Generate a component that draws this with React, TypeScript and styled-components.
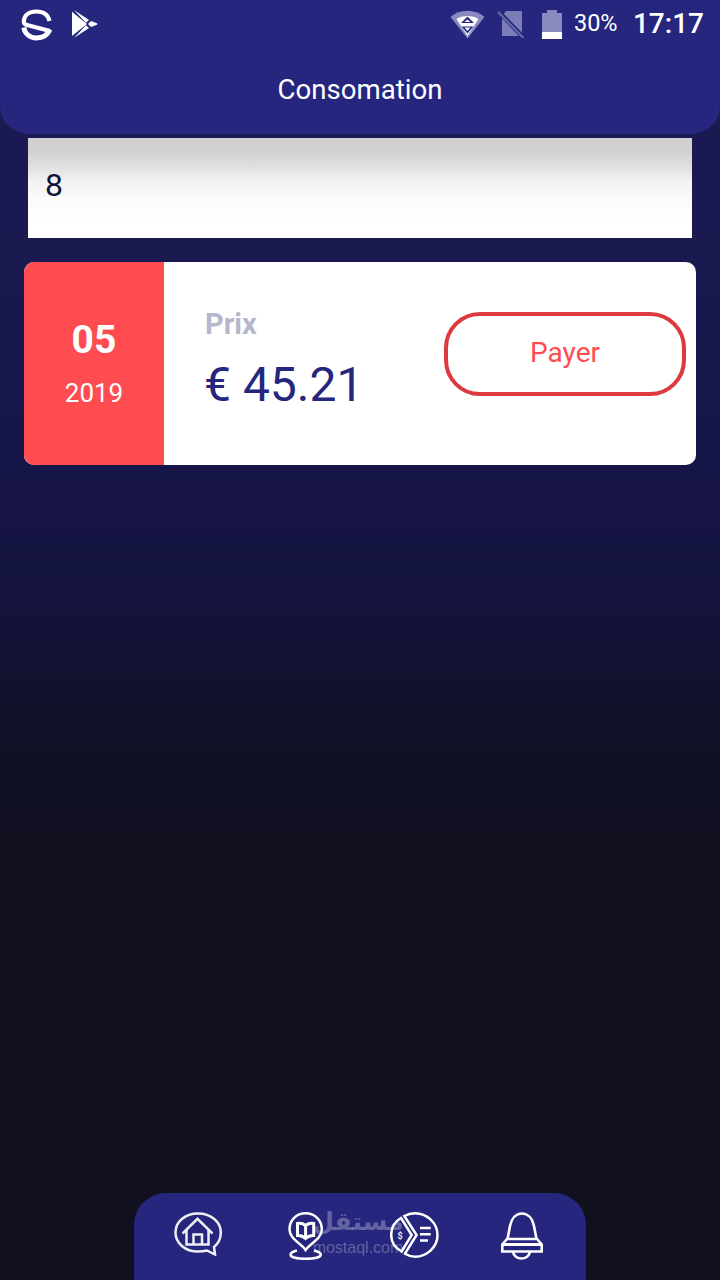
import React from "react";
import styled, { createGlobalStyle } from "styled-components";

const Global = createGlobalStyle`
  html, body { margin: 0; padding: 0; }
  body { font-family: Roboto, "Liberation Sans", sans-serif; background: #11101f; }
`;

const Page = styled.div`
  position: relative;
  width: 720px;
  height: 1280px;
  overflow: hidden;
  display: flex;
  flex-direction: column;
  background: linear-gradient(180deg, #1b1a54 0%, #1a1950 20%, #161547 37%, #13133d 47%, #121230 53%, #111125 59%, #10101f 70%, #10101e 100%);
`;

const Header = styled.header`
  height: 134px;
  flex: none;
  background: #26267e;
  border-radius: 0 0 28px 28px;
  display: flex;
  flex-direction: column;
`;

const StatusBar = styled.div`
  height: 48px;
  display: flex;
  align-items: center;
  padding: 0 16px 0 20px;
  color: #fff;
`;

const StatusLeft = styled.div`
  display: flex;
  align-items: center;
  gap: 19px;
  flex: 1;
`;

const StatusRight = styled.div`
  display: flex;
  align-items: center;
`;

const Percent = styled.span`
  font-size: 23.5px;
  margin-left: 12px;
  width: 59px;
  line-height: 1;
`;

const Clock = styled.span`
  font-size: 28px;
  font-weight: 500;
  line-height: 1;
`;

const Title = styled.h1`
  margin: 0;
  padding-top: 24px;
  text-align: center;
  font-size: 27.6px;
  font-weight: 400;
  line-height: 36px;
  color: #fff;
`;

const ValueBox = styled.div`
  height: 100px;
  margin: 4px 28px 0;
  padding-left: 17px;
  display: flex;
  align-items: center;
  padding-bottom: 6px;
  box-sizing: border-box;
  background: linear-gradient(180deg, #cfcfcf 0%, #d2d2d2 14%, #dedede 27%, #f2f2f2 44%, #fbfbfb 62%, #ffffff 85%);
  color: #12113a;
  font-size: 32px;
  line-height: 1;
`;

const Card = styled.section`
  height: 203px;
  margin: 24px 24px 0;
  display: flex;
  background: #fff;
  border-radius: 10px;
  overflow: hidden;
`;

const DateCol = styled.div`
  width: 140px;
  flex: none;
  background: #ff4c50;
  color: #fff;
  display: flex;
  flex-direction: column;
  align-items: center;
  padding-top: 56px;
  box-sizing: border-box;
`;

const Month = styled.div`
  font-size: 39px;
  font-weight: 700;
  line-height: 44px;
`;

const Year = styled.div`
  font-size: 26px;
  line-height: 30px;
  margin-top: 16px;
`;

const PriceCol = styled.div`
  flex: 1;
  padding: 45px 0 0 41px;
`;

const PriceLabel = styled.div`
  font-size: 29px;
  font-weight: 700;
  line-height: 34px;
  color: #b7b7cc;
`;

const PriceValue = styled.div`
  font-size: 48px;
  line-height: 58px;
  margin-top: 15px;
  margin-left: -1px;
  color: #26267e;
  white-space: nowrap;
`;

const PayButton = styled.button`
  width: 242px;
  height: 84px;
  margin: 50px 10px 0 0;
  flex: none;
  box-sizing: border-box;
  border: 4px solid #dc3a3e;
  border-radius: 36px;
  background: #fff;
  color: #ff4c50;
  font-family: inherit;
  font-size: 28px;
  padding: 0 0 3px;
`;

const BottomNav = styled.nav`
  margin-top: auto;
  align-self: center;
  width: 452px;
  height: 87px;
  box-sizing: border-box;
  padding: 19px 0 0 40px;
  background: #26267e;
  border-radius: 32px 32px 0 0;
  display: grid;
  grid-template-columns: 114px 102px 111px 42px;
  align-items: start;
`;

const NavItem = styled.a`
  display: block;
  line-height: 0;
`;

const Watermark = styled.div`
  position: absolute;
  left: 298px;
  top: 1207px;
  width: 120px;
  text-align: center;
  color: rgba(255, 255, 255, 0.28);
  pointer-events: none;
  font-family: "Liberation Sans", "Noto Sans", sans-serif;
`;

const WatermarkAr = styled.div`
  font-size: 25px;
  font-weight: 700;
  line-height: 30px;
  font-family: "DejaVu Sans", sans-serif;
`;

const WatermarkEn = styled.div`
  font-size: 16px;
  line-height: 14px;
  margin-top: 4px;
`;

const LogoS = () => (
  <svg width="33" height="33" viewBox="0 0 33 33" fill="none" stroke="#fff" strokeWidth="5">
    <path d="M29.500 13C28 6.500 23 3.500 16.500 3.500C9 3.500 4 7 3.800 13.500C3.800 15 5 16.500 7 17L30 23" strokeWidth="4.200" />
    <path d="M30 21.500C27.500 27 22.500 30 16.500 30C10 30 5 26 3.800 19.500" />
  </svg>
);

const PlayLogo = () => (
  <svg width="26" height="28" viewBox="0 0 26 28" fill="#fff">
    <path d="M0 1.700V26L15 14Z" />
    <path d="M2 0L17 10L14 12.700Z" />
    <path d="M2 28L17 18L14 15.300Z" />
    <path d="M16 14L19 11L25 13.300Q26 14 25 14.700L19 17Z" />
  </svg>
);

const Wifi = () => (
  <svg width="35" height="29" viewBox="0 0 35 29">
    <path d="M0.500 7C10 -1.500 25 -1.500 34.500 7L17.500 28.500Z" fill="#8a8ac0" />
    <path d="M6.500 9C12 5 23 5 28.500 9L17.500 26Z" fill="#fff" />
    <path d="M17.500 6.500L24 13H11Z M11.500 16.500H23.500L17.500 23.500Z" fill="#26267e" />
    <path d="M17.500 9.500L20.500 12H14.500Z M14.500 17.500H20.500L17.500 21Z" fill="#fff" />
  </svg>
);

const NoSim = () => (
  <svg width="27" height="28" viewBox="0 0 27 28" style={{ marginLeft: 13 }}>
    <path d="M8 1H24V26H4V6Z" fill="#7c7cb6" />
    <path d="M0 1L26 28" stroke="#26267e" strokeWidth="4.500" />
    <path d="M0 2L25.500 28" stroke="#6c6ca9" strokeWidth="2" />
  </svg>
);

const Battery = () => (
  <svg width="20" height="29" viewBox="0 0 20 29" style={{ marginLeft: 17 }}>
    <path d="M0 3H5V0H15V3H20V29H0Z" fill="#8a8ac0" />
    <rect x="0" y="22" width="20" height="7" fill="#fff" />
  </svg>
);

const HomeIcon = () => (
  <svg width="48" height="44" viewBox="0 0 48 44" fill="none" stroke="#eeeef4" strokeWidth="2.500">
    <path d="M24 1.500C11 1.500 1.500 10 1.500 20.500C1.500 31 11 39.500 24 39.500C27.500 39.500 30 39.200 33 38.500L41 42.500L40 35C44.500 31.500 46.800 26.500 46.800 20.500C46.800 10 37 1.500 24 1.500Z" />
    <path d="M8.500 21.500L23.500 6.800L38.500 21.500" />
    <path d="M12.500 18V32.500H34.500V18" />
    <path d="M19.500 32.500V22.500H28V32.500" />
  </svg>
);

const MapBookIcon = () => (
  <svg width="36" height="48" viewBox="0 0 36 48" fill="none" stroke="#fff" strokeWidth="2.500">
    <path d="M17.600 38C14 32 1.500 27 1.500 17.500C1.500 8 8.500 1.300 17.600 1.300C26.700 1.300 33.800 8 33.800 17.500C33.800 27 21.500 32 17.600 38Z" />
    <path d="M9 38.500C4.500 39.500 2.500 41 2.500 42.800C2.500 45.200 9 46.800 17.600 46.800C26.200 46.800 32.800 45.200 32.800 42.800C32.800 41 30.500 39.500 26 38.500" />
    <path d="M17.600 13.500C15 11.500 12.500 11 9.500 11.500V23.500C12.500 23.300 15 24 17.600 26.500C20.200 24 22.700 23.300 25.700 23.500V11.500C22.700 11 20.200 11.500 17.600 13.500V26.500" strokeWidth="3" />
  </svg>
);

const DollarIcon = () => (
  <svg width="49" height="46" viewBox="0 0 49 46" fill="none" stroke="#fff" strokeWidth="2.500">
    <path d="M11 6L21.700 23L11.600 39.500C5 36 1.200 30 1.200 23C1.200 16 5 9.500 11 6Z" />
    <path d="M14.300 4C17.500 2.200 21 1.300 25 1.300C37 1.300 47.500 11 47.500 23C47.500 35 37 44.700 25 44.700C21.500 44.700 18.500 43.800 15 41.700L26.600 23Z" />
    <path d="M30 16H40.700M30 22.200H40.700M30 28.400H38" />
    <text x="7.500" y="26.500" fill="#eee" stroke="none" fontSize="9" fontWeight="700" fontFamily="Roboto, sans-serif">$</text>
  </svg>
);

const BellIcon = () => (
  <svg width="42" height="48" viewBox="0 0 42 48" fill="none" stroke="#fff" strokeWidth="2.600">
    <path d="M6.500 27L9 14C10.500 6.500 15 1.500 21 1.500C27 1.500 31.500 6.500 33 14L35.500 27" />
    <path d="M6 27H36L40.700 32.500V39.500H1.300V32.500Z" />
    <path d="M1.300 32.500H40.700" strokeWidth="3" />
    <path d="M12 39.500C12.500 44 16.500 46.500 20.500 46.500C24.500 46.500 28.500 44 29 39.500" />
  </svg>
);

export default function App() {
  return (
    <Page>
      <Global />
      <Header>
        <StatusBar>
          <StatusLeft>
            <LogoS />
            <PlayLogo />
          </StatusLeft>
          <StatusRight>
            <Wifi />
            <NoSim />
            <Battery />
            <Percent>30%</Percent>
            <Clock>17:17</Clock>
          </StatusRight>
        </StatusBar>
        <Title>Consomation</Title>
      </Header>
      <ValueBox>8</ValueBox>
      <Card>
        <DateCol>
          <Month>05</Month>
          <Year>2019</Year>
        </DateCol>
        <PriceCol>
          <PriceLabel>Prix</PriceLabel>
          <PriceValue>€ 45.21</PriceValue>
        </PriceCol>
        <PayButton>Payer</PayButton>
      </Card>
      <BottomNav>
        <NavItem><HomeIcon /></NavItem>
        <NavItem><MapBookIcon /></NavItem>
        <NavItem><DollarIcon /></NavItem>
        <NavItem><BellIcon /></NavItem>
      </BottomNav>
      <Watermark>
        <WatermarkAr>مستقل</WatermarkAr>
        <WatermarkEn>mostaql.com</WatermarkEn>
      </Watermark>
    </Page>
  );
}
